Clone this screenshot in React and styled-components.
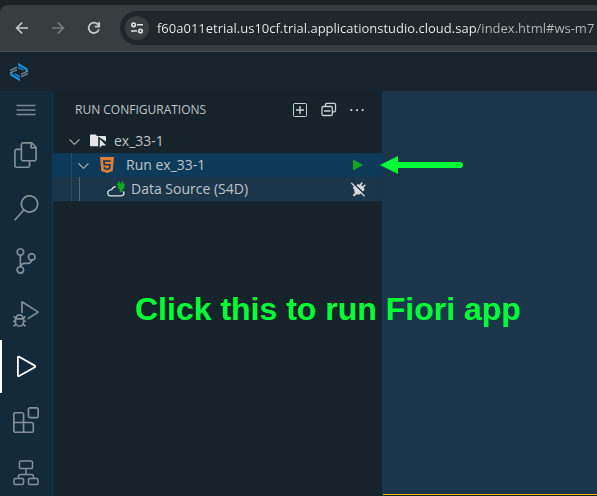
import React from "react";
import styled, { createGlobalStyle } from "styled-components";
import {
  VscFiles,
  VscSearch,
  VscSourceControl,
  VscDebugAlt,
  VscExtensions,
  VscEllipsis,
  VscChevronDown,
} from "react-icons/vsc";

const GlobalStyle = createGlobalStyle`
  * { box-sizing: border-box; }
  body { margin: 0; background: #17242c; font-family: "Open Sans", "Noto Sans", sans-serif; }
  button { font: inherit; color: inherit; background: none; border: 0; padding: 0; margin: 0; cursor: pointer; }
  svg { display: block; flex: none; }
`;

const Page = styled.div`
  position: relative;
  height: 100vh;
  display: flex;
  flex-direction: column;
  overflow: hidden;
`;

const TabStrip = styled.div`
  flex: none;
  background: #1b2224;
  padding-top: 5px;
`;

const BrowserBar = styled.div`
  height: 47px;
  display: flex;
  align-items: center;
  background: #373e40;
  border-bottom: 1px solid #474e50;
  border-top-left-radius: 8px;
  padding-left: 4px;
`;

const NavButton = styled.button`
  width: 36px;
  height: 34px;
  display: grid;
  place-items: center;
  color: ${(p) => (p.$dim ? "#767c7e" : "#c7cccd")};
`;

const Omnibox = styled.div`
  flex: 1;
  min-width: 0;
  height: 34px;
  margin-left: 8px;
  padding-left: 5px;
  display: flex;
  align-items: center;
  gap: 8px;
  background: #1f272a;
  border-radius: 17px 0 0 17px;
`;

const SiteInfo = styled.button`
  flex: none;
  width: 24px;
  height: 24px;
  border-radius: 50%;
  background: #373e40;
  color: #dfe3e4;
  display: grid;
  place-items: center;
`;

const Address = styled.input`
  flex: 1;
  min-width: 0;
  border: 0;
  outline: 0;
  padding: 0;
  font-family: "Open Sans", sans-serif;
  font-size: 13px;
  line-height: 20px;
  color: #e8eaea;
  background: linear-gradient(to right, #f0f2f2 320px, #b6bbbc 320px) text;
  -webkit-text-fill-color: transparent;
`;

const AppHeader = styled.header`
  flex: none;
  height: 39px;
  display: flex;
  align-items: center;
  padding-left: 9px;
  background: #17242d;
`;

const Workbench = styled.div`
  flex: 1;
  min-height: 0;
  display: flex;
`;

const ActivityBar = styled.nav`
  flex: none;
  width: 53px;
  display: flex;
  flex-direction: column;
  background: #132a3b;
  border-right: 1px solid #0c3a5a;
  overflow: hidden;
`;

const MenuButton = styled.button`
  flex: none;
  height: 37px;
  display: grid;
  place-items: center;
  color: #7b8892;
`;

const ActivityButton = styled.button`
  flex: none;
  height: 53px;
  display: grid;
  place-items: center;
  padding-right: 2px;
  border-left: 2px solid ${(p) => (p.$active ? "#ffffff" : "transparent")};
  color: ${(p) => (p.$active ? "#ffffff" : "#84919b")};
`;

const SideBar = styled.aside`
  flex: none;
  width: 330px;
  background: #17232b;
  border-right: 1px solid #0e3753;
  color: #bfc4c7;
`;

const PanelHeader = styled.div`
  height: 38px;
  display: flex;
  align-items: center;
  justify-content: space-between;
  padding: 0 16px 0 22px;
`;

const PanelTitle = styled.h2`
  margin: 0;
  font-size: 12px;
  line-height: 18px;
  font-weight: 400;
`;

const PanelActions = styled.div`
  display: flex;
  gap: 10px;
`;

const IconButton = styled.button`
  width: 18px;
  height: 18px;
  display: grid;
  place-items: center;
  color: ${(p) => p.$color || "#cdd1d3"};
`;

const Tree = styled.div`
  font-size: 14px;
  line-height: 24px;
`;

const TreeRow = styled.div`
  height: 24px;
  display: flex;
  align-items: center;
  padding: 0 15px 0 ${(p) => p.$indent}px;
  background: ${(p) => p.$bg || "transparent"};
`;

const Guide = styled.span`
  flex: none;
  align-self: stretch;
  width: ${(p) => p.$width}px;
  border-left: 1px solid ${(p) => (p.$strong ? "#5b6872" : "#2d495c")};
`;

const RowIcon = styled.span`
  flex: none;
  width: ${(p) => p.$width}px;
  display: flex;
`;

const RowLabel = styled.span`
  flex: 1;
  white-space: nowrap;
`;

const Editor = styled.main`
  flex: 1;
  min-width: 0;
  background: #1b364b;
  border-bottom: 1px solid #17242c;
  box-shadow: inset 0 -1px #fdbb06;
`;

const ArrowNote = styled.svg`
  position: absolute;
  left: 380px;
  top: 155px;
`;

const CaptionNote = styled.p`
  position: absolute;
  left: 135px;
  top: 291px;
  margin: 0;
  white-space: nowrap;
  font-family: "Liberation Sans", Arial, sans-serif;
  font-weight: 700;
  font-size: 32px;
  line-height: 37px;
  color: #00ff37;
`;

const BackIcon = () => (
  <svg width="14" height="14" viewBox="0 0 14 14" fill="none" stroke="currentColor" strokeWidth="1.7">
    <path d="M13 7H2M7.2 1.5L1.7 7l5.5 5.5" />
  </svg>
);

const ForwardIcon = () => (
  <svg width="14" height="14" viewBox="0 0 14 14" fill="none" stroke="currentColor" strokeWidth="1.7">
    <path d="M1 7h11M6.8 1.5L12.3 7l-5.5 5.5" />
  </svg>
);

const ReloadIcon = () => (
  <svg width="14" height="14" viewBox="0 0 14 14" fill="none" stroke="currentColor" strokeWidth="1.7">
    <path d="M11.9 8.2A5.2 5.2 0 1 1 10.8 3.4L12.2 5" />
    <path d="M12.2 1v4.6H7.8" />
  </svg>
);

const TuneIcon = () => (
  <svg width="14" height="14" viewBox="0 0 14 14" fill="none" stroke="currentColor" strokeWidth="1.6">
    <circle cx="3.6" cy="3.8" r="1.8" />
    <path d="M7 3.8h6M1 10h6" />
    <circle cx="10.5" cy="10" r="1.8" />
  </svg>
);

const StudioLogo = () => (
  <svg width="20" height="20" viewBox="0 0 20 20">
    <path d="M9 .8L18.6 6.4V9.4L15.8 8V7.2L9 3.4zM9 4.4l5.6 3.2v1.2L9 6.2z" fill="#1591db" />
    <path d="M11 19.2L1.4 13.6v-3L4.2 12v.8l6.8 3.8zM11 15.6l-5.6-3.2v-1.2L11 13.8z" fill="#1591db" />
    <path d="M1 7.8L8 4.6v1.5L1 9.3zM1 10.3l7-3.2v1.4l-7 3.2z" fill="#6d8799" />
    <path d="M19 12.2l-7 3.2v-1.5l7-3.2zM19 9.7l-7 3.2v-1.4l7-3.2z" fill="#6d8799" />
  </svg>
);

const HamburgerIcon = () => (
  <svg width="20" height="12" viewBox="0 0 20 12" fill="none" stroke="currentColor" strokeWidth="1.4">
    <path d="M0.5 1.5h19M0.5 6h19M0.5 10.5h19" />
  </svg>
);

const RunIcon = () => (
  <svg width="26" height="26" viewBox="0 0 26 26" fill="none" stroke="currentColor" strokeWidth="1.8" strokeLinejoin="round">
    <path d="M4.9 3.3v18.2q0 .9 1.2.5L21.8 13.2q1-.8 0-1.6L6.1 2.7q-1.2-.3-1.2.6z" />
  </svg>
);

const HierarchyIcon = () => (
  <svg width="26" height="26" viewBox="0 0 26 26" fill="none" stroke="currentColor" strokeWidth="1.5">
    <rect x="6.5" y="1" width="13" height="7.5" rx="1.3" />
    <rect x="1" y="18.5" width="9.5" height="6" rx="1.2" />
    <rect x="15.5" y="18.5" width="9.5" height="6" rx="1.2" />
    <path d="M13 8.5v6M5.5 18.5v-2q0-2 2-2h11q2 0 2 2v2" />
  </svg>
);

const AddBoxIcon = () => (
  <svg width="16" height="14" viewBox="0 0 16 14" fill="none" stroke="currentColor">
    <rect x="0.5" y="0.5" width="13" height="13" rx="1" />
    <path d="M3 7h8M7 3v8" strokeWidth="1.4" />
  </svg>
);

const CollapseAllIcon = () => (
  <svg width="18" height="18" viewBox="0 0 18 18" fill="none" stroke="currentColor" strokeWidth="1.3">
    <path d="M5.5 5.2V3.6q0-1.3 1.3-1.3h7.4q1.3 0 1.3 1.3v6q0 1.3-1.3 1.3h-1.5" />
    <rect x="2" y="5.5" width="10.3" height="9" rx="1.2" />
    <path d="M4 10h6.4" strokeWidth="1.5" />
  </svg>
);

const FolderRunIcon = () => (
  <svg width="17" height="14" viewBox="0 0 17 14" fill="#e4e6e7">
    <path d="M1 .6h4.6L7 2h8q1 0 1 1v9.2H1q-1 0-1-1V1.6q0-1 1-1z" />
    <path d="M8.2 2.6V14H17V8.2z" fill="#17232b" />
    <path d="M9.8 5v8.8l2.2-2.4h4.2z" />
  </svg>
);

const Html5Icon = () => (
  <svg width="14" height="16" viewBox="0 0 14 16">
    <path d="M0 0h14l-1.3 14L7 16l-5.7-2z" fill="#d97f3b" />
    <path d="M10.6 4H4l.3 3.7h5.6l-.4 3.8L7 12.4l-2.5-.9-.1-1.5" fill="none" stroke="#0e3a59" strokeWidth="1.6" />
  </svg>
);

const CloudPlugIcon = () => (
  <svg width="18" height="16" viewBox="0 0 18 16" fill="none">
    <path d="M8.8 5.6A4.2 4.2 0 0 0 4.8 8.7Q.8 9 .8 12t3 2.8h10.7q2.5-.2 2.5-2.5 0-1-.8-1.8" stroke="#dfe2e4" strokeWidth="1.3" />
    <path d="M11.2.6h1.6V2.6h1.6V.6H16v2h1.8v1.6h-.5v2.2q0 1.6-1.9 2.1V11h-2.6V8.5q-1.9-.5-1.9-2.1V4.2H9.8V2.6h1.4z" fill="#12a51d" />
  </svg>
);

const PlayIcon = () => (
  <svg width="12" height="12" viewBox="0 0 12 12" fill="currentColor">
    <path d="M1 .5L11 6 1 11.5z" />
  </svg>
);

const UnplugIcon = () => (
  <svg width="16" height="16" viewBox="0 0 16 16">
    <path d="M2.8 6l2.4-.6L7.8 3l1.6.8L11.8 1l1 1-1.6 2.4 1.2 1L15 3.2l.8 1-2.2 2.5 1 1.7-2.2 3-3 2-2.8-.2-2.4 2.4-1.4-1.2 2-2.7-.7-3z" fill="#d5d9db" />
    <path d="M2.4 1.2L15.8 14.4" stroke="#1b364b" strokeWidth="1.4" />
    <path d="M1.3 2L14.6 15.2" stroke="#d5d9db" strokeWidth="1.2" />
  </svg>
);

const activities = [
  { label: "Explorer", icon: <VscFiles size={26} /> },
  { label: "Search", icon: <VscSearch size={26} /> },
  { label: "Source Control", icon: <VscSourceControl size={26} /> },
  { label: "Run and Debug", icon: <VscDebugAlt size={26} /> },
  { label: "Run Configurations", icon: <RunIcon />, active: true },
  { label: "Extensions", icon: <VscExtensions size={26} /> },
  { label: "Project Structure", icon: <HierarchyIcon /> },
];

export default function App() {
  return (
    <Page>
      <GlobalStyle />
      <TabStrip>
        <BrowserBar>
          <NavButton aria-label="Back"><BackIcon /></NavButton>
          <NavButton $dim aria-label="Forward"><ForwardIcon /></NavButton>
          <NavButton aria-label="Reload"><ReloadIcon /></NavButton>
          <Omnibox>
            <SiteInfo aria-label="Site information"><TuneIcon /></SiteInfo>
            <Address
              aria-label="Address"
              defaultValue="f60a011etrial.us10cf.trial.applicationstudio.cloud.sap/index.html#ws-m7"
            />
          </Omnibox>
        </BrowserBar>
      </TabStrip>
      <AppHeader><StudioLogo /></AppHeader>
      <Workbench>
        <ActivityBar>
          <MenuButton aria-label="Menu"><HamburgerIcon /></MenuButton>
          {activities.map((a) => (
            <ActivityButton key={a.label} $active={a.active} aria-label={a.label}>
              {a.icon}
            </ActivityButton>
          ))}
        </ActivityBar>
        <SideBar>
          <PanelHeader>
            <PanelTitle>RUN CONFIGURATIONS</PanelTitle>
            <PanelActions>
              <IconButton aria-label="Create configuration"><AddBoxIcon /></IconButton>
              <IconButton aria-label="Collapse all"><CollapseAllIcon /></IconButton>
              <IconButton aria-label="More actions"><VscEllipsis size={18} /></IconButton>
            </PanelActions>
          </PanelHeader>
          <Tree>
            <TreeRow $indent={13}>
              <RowIcon $width={24}><VscChevronDown size={17} /></RowIcon>
              <RowIcon $width={24}><FolderRunIcon /></RowIcon>
              <RowLabel>ex_33-1</RowLabel>
            </TreeRow>
            <TreeRow $indent={18} $bg="#0e3a59">
              <Guide $width={4} />
              <RowIcon $width={25}><VscChevronDown size={17} /></RowIcon>
              <RowIcon $width={26}><Html5Icon /></RowIcon>
              <RowLabel>Run ex_33-1</RowLabel>
              <IconButton $color="#12a51d" aria-label="Run ex_33-1"><PlayIcon /></IconButton>
            </TreeRow>
            <TreeRow $indent={18} $bg="#1b364b">
              <Guide $width={8} />
              <Guide $width={28} $strong />
              <RowIcon $width={24}><CloudPlugIcon /></RowIcon>
              <RowLabel>Data Source (S4D)</RowLabel>
              <IconButton aria-label="Disconnect data source"><UnplugIcon /></IconButton>
            </TreeRow>
          </Tree>
        </SideBar>
        <Editor />
      </Workbench>
      <ArrowNote width="84" height="20" viewBox="0 0 84 20" aria-hidden="true">
        <path d="M0 10L18 1v18z" fill="#00ff37" />
        <path d="M17 10h63" stroke="#00ff37" strokeWidth="6" strokeLinecap="round" />
      </ArrowNote>
      <CaptionNote>Click this to run Fiori app</CaptionNote>
    </Page>
  );
}
